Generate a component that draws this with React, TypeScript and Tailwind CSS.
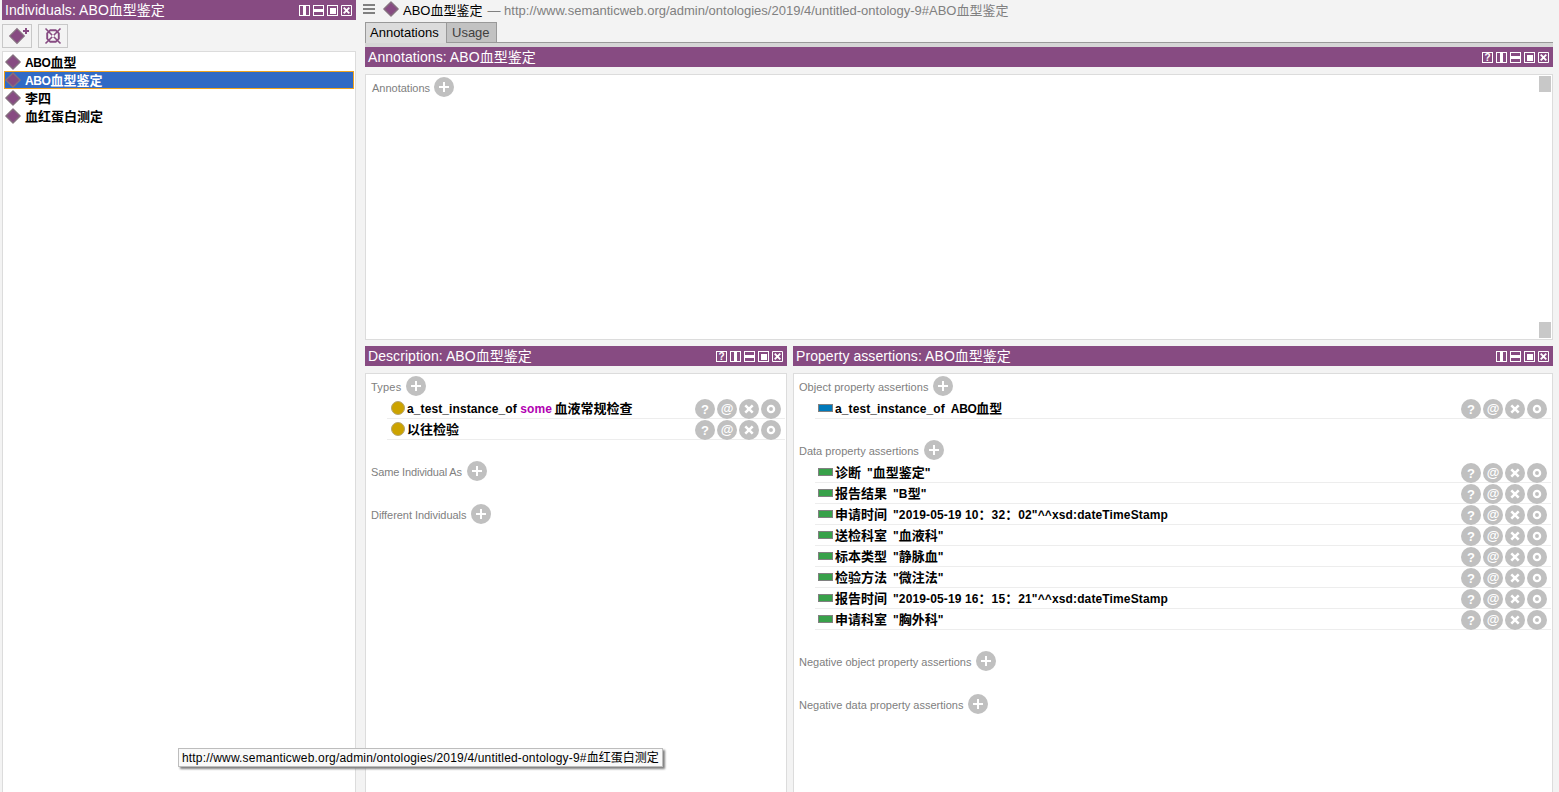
import type { ReactNode } from 'react';
import clsx from 'clsx';

const CJK = /([\u3000-\u9fff\uff00-\uffef]+)/;

// Latin text keeps the inherited size, Chinese runs get their own
function Mixed({ text, cjk = 'text-[13px]' }: { text: string; cjk?: string }) {
  return (
    <>
      {text.split(CJK).map((part, i) =>
        i % 2 ? (
          <span key={i} className={clsx('tracking-normal', cjk)}>
            {part}
          </span>
        ) : (
          part
        )
      )}
    </>
  );
}

function Diamond() {
  return (
    <svg width="16" height="16" viewBox="0 0 16 16" className="shrink-0">
      <path d="M8 .9 15.1 8 8 15.1.9 8Z" fill="#874b82" stroke="#85707f" strokeWidth="1.4" strokeLinejoin="round" />
    </svg>
  );
}

function WindowButtons({ help }: { help?: boolean }) {
  const frame = <path d="M.5.5h10v10h-10z" fill="none" stroke="#fff" />;
  return (
    <div className="flex gap-[3px]">
      {help && (
        <span className="flex h-[11px] w-[11px] items-center justify-center border border-white pt-px text-[10px] leading-none font-bold">
          ?
        </span>
      )}
      <svg width="11" height="11" shapeRendering="crispEdges">
        {frame}
        <path d="M4 1h3v9H4z" fill="#fff" />
      </svg>
      <svg width="11" height="11" shapeRendering="crispEdges">
        {frame}
        <path d="M1 4h9v3H1z" fill="#fff" />
      </svg>
      <svg width="11" height="11" shapeRendering="crispEdges">
        {frame}
        <path d="M2.5 2.5h6v6h-6z" fill="#fff" />
      </svg>
      <svg width="11" height="11">
        {frame}
        <path d="m2.7 2.7 5.6 5.6M8.3 2.7 2.7 8.3" stroke="#fff" strokeWidth="1.9" />
      </svg>
    </div>
  );
}

function ViewHeader({ title, help }: { title: string; help?: boolean }) {
  return (
    <div className="flex h-5 shrink-0 items-center justify-between bg-[#874b82] pr-1 pl-[3px] text-sm text-white">
      <span className="leading-5 tracking-[0.07px] whitespace-pre">
        <Mixed text={title} cjk="text-[14px]" />
      </span>
      <WindowButtons help={help} />
    </div>
  );
}

function AddButton() {
  return (
    <svg width="20" height="20" viewBox="0 0 20 20" className="shrink-0">
      <circle cx="10" cy="10" r="10" fill="#c0c0c0" />
      <path d="M10 5v10M5 10h10" stroke="#fff" strokeWidth="2" />
    </svg>
  );
}

function RowActions() {
  return (
    <div className="flex gap-0.5 pt-px text-[13px] font-bold text-white">
      <span className="flex h-5 w-5 items-center justify-center rounded-full bg-[#c0c0c0] pt-0.5">?</span>
      <span className="flex h-5 w-5 items-center justify-center rounded-full bg-[#c0c0c0]">@</span>
      <svg width="20" height="20" viewBox="0 0 20 20">
        <circle cx="10" cy="10" r="10" fill="#c0c0c0" />
        <path d="m6.3 6.3 7.4 7.4M13.7 6.3l-7.4 7.4" stroke="#fff" strokeWidth="2.5" />
      </svg>
      <svg width="20" height="20" viewBox="0 0 20 20">
        <circle cx="10" cy="10" r="10" fill="#c0c0c0" />
        <circle cx="10" cy="10" r="3.1" fill="none" stroke="#fff" strokeWidth="2.3" />
      </svg>
    </div>
  );
}

function Section({ title, className, children }: { title: string; className?: string; children?: ReactNode }) {
  return (
    <div className="mb-[21px]">
      <div className="flex h-[22px] items-start gap-[5px] pl-[5px] text-[11px] text-[#808080]">
        <span className={clsx('pt-px leading-[21px]', className)}>{title}</span>
        <AddButton />
      </div>
      {children}
    </div>
  );
}

function Row({ children }: { children: ReactNode }) {
  return (
    <div className="mr-px ml-[21px] flex h-[21px] justify-between pr-1 pl-[3px] text-xs font-bold shadow-[inset_0_-1px_0_#ededed]">
      <div className="flex leading-[21px] tracking-[0.1px] whitespace-pre">{children}</div>
      <RowActions />
    </div>
  );
}

function ClassIcon() {
  return (
    <svg width="17" height="20" viewBox="0 0 17 20" className="shrink-0">
      <circle cx="8" cy="10" r="6.5" fill="#cca300" stroke="#b5a571" />
    </svg>
  );
}

function PropertyIcon({ color }: { color: string }) {
  return <span className={clsx('mt-1.5 mr-0.5 h-2 w-[15px] border border-[#808080]', color)} />;
}

const individuals = ['ABO血型', 'ABO血型鉴定', '李四', '血红蛋白测定'];

const dataAssertions = [
  ['诊断', '"血型鉴定"'],
  ['报告结果', '"B型"'],
  ['申请时间', '"2019-05-19 10：32：02"^^xsd:dateTimeStamp'],
  ['送检科室', '"血液科"'],
  ['标本类型', '"静脉血"'],
  ['检验方法', '"微注法"'],
  ['报告时间', '"2019-05-19 16：15：21"^^xsd:dateTimeStamp'],
  ['申请科室', '"胸外科"'],
];

export default function App() {
  return (
    <div className="relative flex h-[792px] w-[1559px] gap-[9px] overflow-hidden bg-[#f3f3f3] pr-1.5 pl-0.5 font-['Liberation_Sans','Noto_Sans_CJK_SC',sans-serif] text-black">
      <aside className="flex w-[354px] shrink-0 flex-col">
        <ViewHeader title="Individuals: ABO血型鉴定" />
        <div className="flex gap-1.5 pt-1 pb-[3px]">
          <button className="h-6 w-[30px] border border-[#c8c8c8]">
            <svg width="28" height="22" viewBox="0 0 28 22">
              <path d="M14 3.7 21.3 11 14 18.3 6.7 11Z" fill="#874b82" stroke="#85707f" strokeWidth="1.2" />
              <path d="M23 3v6M20 6h6" stroke="#874b82" strokeWidth="2" />
            </svg>
          </button>
          <button className="h-6 w-[30px] border border-[#c8c8c8]">
            <svg width="28" height="22" viewBox="0 0 28 22" fill="none" stroke="#874b82" strokeWidth="1.6">
              <path d="M11.3 5.2h5.4l3.1 3.1v5.4l-3.1 3.1h-5.4l-3.1-3.1V8.3Z" strokeWidth="1.9" />
              <path d="m6.5 3.5 15 15M21.5 3.5l-15 15" />
              <circle cx="14" cy="11" r="1.2" fill="#f3f3f3" stroke="none" />
            </svg>
          </button>
        </div>
        <div className="flex-1 border border-b-0 border-[#dcdcdc] bg-white px-px pt-px text-xs font-bold">
          {individuals.map((name, i) => (
            <div
              key={name}
              className={clsx(
                'flex h-[18px] items-center border',
                i === 1 ? 'border-[#f0a31e] bg-[#316ac5] text-white' : 'border-transparent'
              )}
            >
              <Diamond />
              <span className="pt-px pl-1 leading-[17px] tracking-[-0.4px]">
                <Mixed text={name} />
              </span>
            </div>
          ))}
        </div>
      </aside>

      <main className="flex min-w-0 flex-1 flex-col">
        <div className="-ml-0.5 flex h-[22px] items-start text-[13px]">
          <svg width="12" height="18" shapeRendering="crispEdges" className="mr-2">
            <path d="M0 5h12M0 9h12M0 13h12" stroke="#808080" strokeWidth="2" />
          </svg>
          <div className="pt-px">
            <Diamond />
          </div>
          <p className="pl-1 leading-[21px] whitespace-pre text-[#808080]">
            <span className="text-black">
              <Mixed text="ABO血型鉴定" />
            </span>
            <span className="pl-[5px]">— </span>
            <Mixed text="http://www.semanticweb.org/admin/ontologies/2019/4/untitled-ontology-9#ABO血型鉴定" />
          </p>
        </div>
        <div className="flex h-[21px] text-[13px] leading-5">
          <div className="w-[81px] border-t border-l border-[#999] bg-[#dcdcdc] pl-1">Annotations</div>
          <div className="w-[51px] border border-[#999] bg-[#c2c2c2] pl-[5px] text-[#404040]">Usage</div>
          <div className="flex-1 border-b border-[#999]" />
        </div>
        <div className="h-1 bg-[#d6d6d6]" />
        <ViewHeader title="Annotations: ABO血型鉴定" help />
        <div className="mt-[7px] flex h-[266px] shrink-0 justify-between border border-[#dcdcdc] bg-white">
          <div className="pt-0.5 pl-px">
            <Section title="Annotations" className="-mr-px" />
          </div>
          <div className="flex flex-col justify-between py-px pr-px">
            <div className="h-4 w-3 bg-[#c8c8c8]" />
            <div className="h-4 w-3 bg-[#c8c8c8]" />
          </div>
        </div>

        <div className="mt-1.5 flex flex-1 gap-1.5">
          <div className="flex w-[422px] flex-col">
            <ViewHeader title="Description: ABO血型鉴定" help />
            <div className="mt-[7px] flex-1 border border-b-0 border-[#dcdcdc] bg-white pt-0.5">
              <Section title="Types" className="tracking-[0.2px]">
                <Row>
                  <ClassIcon />
                  <span>
                    a_test_instance_of <span className="text-[#b200b2]">some</span>{' '}
                    <span className="-ml-px">
                      <Mixed text="血液常规检查" />
                    </span>
                  </span>
                </Row>
                <Row>
                  <ClassIcon />
                  <span>
                    <Mixed text="以往检验" />
                  </span>
                </Row>
              </Section>
              <Section title="Same Individual As" className="tracking-[-0.15px]" />
              <Section title="Different Individuals" className="tracking-[-0.05px]" />
            </div>
          </div>

          <div className="flex flex-1 flex-col">
            <ViewHeader title="Property assertions: ABO血型鉴定" />
            <div className="mt-[7px] flex-1 border border-b-0 border-[#dcdcdc] bg-white pt-0.5">
              <Section title="Object property assertions" className="tracking-[0.04px]">
                <Row>
                  <PropertyIcon color="bg-[#0079ba]" />
                  <span>
                    a_test_instance_of
                    <span className="pl-1.5 tracking-[-0.4px]">
                      <Mixed text="ABO血型" />
                    </span>
                  </span>
                </Row>
              </Section>
              <Section title="Data property assertions">
                {dataAssertions.map(([property, value]) => (
                  <Row key={property}>
                    <PropertyIcon color="bg-[#38a14a]" />
                    <span>
                      <Mixed text={property} />
                      <span className="pl-1.5 tracking-[0.13px]">
                        <Mixed text={value} />
                      </span>
                    </span>
                  </Row>
                ))}
              </Section>
              <Section title="Negative object property assertions" />
              <Section title="Negative data property assertions" />
            </div>
          </div>
        </div>
      </main>

      <div className="absolute top-[748px] left-[178px] h-[19px] w-[485px] border border-[#bdbdbd] bg-[#f9f9f9] pl-[3px] text-xs leading-[18px] tracking-[0.175px] whitespace-nowrap shadow-[2px_2px_2px_#808080]">
        <Mixed text="http://www.semanticweb.org/admin/ontologies/2019/4/untitled-ontology-9#血红蛋白测定" cjk="text-[12px]" />
      </div>
    </div>
  );
}
